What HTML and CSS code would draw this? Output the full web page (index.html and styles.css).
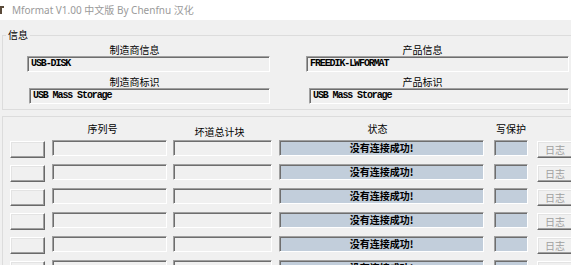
FILE: index.html
```html
<!DOCTYPE html>
<html lang="zh-CN">
<head>
  <meta charset="UTF-8">
  <title>Mformat V1.00 中文版 By Chenfnu 汉化</title>
  <link rel="stylesheet" href="styles.css">
</head>
<body>

<div class="titlebar">
  <svg class="app-icon" width="4" height="10" viewBox="0 0 4 10">
    <path d="M0 1h4v2H2v6H0z" fill="#5a4a3a"/>
  </svg>
  <span class="title-text">Mformat V1.00 中文版 By Chenfnu 汉化</span>
</div>

<div class="window">
  <!-- Grupo de información del dispositivo -->
  <fieldset class="group info">
    <legend>信息</legend>
    <div class="info-grid">
      <div class="info-col">
        <div class="cap">制造商信息</div>
        <div class="edit">USB-DISK</div>
        <div class="cap cap-2">制造商标识</div>
        <div class="edit edit-2">USB Mass Storage</div>
      </div>
      <div class="info-col right">
        <div class="cap">产品信息</div>
        <div class="edit">FREEDIK-LWFORMAT</div>
        <div class="cap cap-2">产品标识</div>
        <div class="edit edit-2">USB Mass Storage</div>
      </div>
    </div>
  </fieldset>

  <div class="group devices">
    <div class="dev-head">
      <div class="c-btn"></div>
      <div class="c-serial h-serial">序列号</div>
      <div class="c-bad h-bad">坏道总计块</div>
      <div class="c-status h-status">状态</div>
      <div class="c-wp">写保护</div>
    </div>

    <div class="dev-row">
      <div class="c-btn raised"></div>
      <div class="c-serial sunken"></div>
      <div class="c-bad sunken"></div>
      <div class="c-status sunken status">没有连接成功!</div>
      <div class="c-wp sunken status"></div>
      <div class="c-log raised">日志</div>
    </div>
    <div class="dev-row">
      <div class="c-btn raised"></div>
      <div class="c-serial sunken"></div>
      <div class="c-bad sunken"></div>
      <div class="c-status sunken status">没有连接成功!</div>
      <div class="c-wp sunken status"></div>
      <div class="c-log raised">日志</div>
    </div>
    <div class="dev-row">
      <div class="c-btn raised"></div>
      <div class="c-serial sunken"></div>
      <div class="c-bad sunken"></div>
      <div class="c-status sunken status">没有连接成功!</div>
      <div class="c-wp sunken status"></div>
      <div class="c-log raised">日志</div>
    </div>
    <div class="dev-row">
      <div class="c-btn raised"></div>
      <div class="c-serial sunken"></div>
      <div class="c-bad sunken"></div>
      <div class="c-status sunken status">没有连接成功!</div>
      <div class="c-wp sunken status"></div>
      <div class="c-log raised">日志</div>
    </div>
    <div class="dev-row">
      <div class="c-btn raised"></div>
      <div class="c-serial sunken"></div>
      <div class="c-bad sunken"></div>
      <div class="c-status sunken status">没有连接成功!</div>
      <div class="c-wp sunken status"></div>
      <div class="c-log raised">日志</div>
    </div>
    <div class="dev-row">
      <div class="c-btn raised"></div>
      <div class="c-serial sunken"></div>
      <div class="c-bad sunken"></div>
      <div class="c-status sunken status">没有连接成功!</div>
      <div class="c-wp sunken status"></div>
      <div class="c-log raised">日志</div>
    </div>
  </div>
</div>

</body>
</html>
```

FILE: styles.css
```css
body {
  margin: 0;
  width: 571px;
  height: 265px;
  overflow: hidden;
  background-color: #f0f0f0;
  font-family: "Noto Sans CJK SC", "Noto Sans", sans-serif;
  font-size: 10px;
  color: #000;
}
.titlebar {
  height: 20px;
  background: #fff;
  display: flex;
  align-items: center;
}
.app-icon {
  display: block;
  margin-right: 8px;
}
.title-text {
  font-family: "Noto Sans", "Noto Sans CJK SC", sans-serif;
  font-size: 10px;
  color: #9a9a9a;
  line-height: 20px;
}
.window {
  padding-left: 2px;
}
/* Marcos de grupo */
.group {
  width: 600px;
  box-sizing: border-box;
  border: 1px solid #dcdcdc;
}
fieldset.info {
  margin: 9px 0 0;
  padding: 3px 0 5px;
  min-width: 0;
}
fieldset.info legend {
  margin-left: 3px;
  padding: 0 2px;
  line-height: 12px;
  font-size: 10px;
}
.info-grid {
  display: flex;
}
.info-col {
  width: 267px;
  display: flex;
  flex-direction: column;
}
.info-col.right {
  width: 289px;
  margin-left: 10px;
}
.cap {
  line-height: 12px;
  text-align: center;
  padding-right: 4px;
}
.cap-2 {
  margin-top: 4px;
}
.edit {
  margin-left: 24px;
  height: 16px;
  box-sizing: border-box;
  border-top: 1px solid #a0a0a0;
  border-left: 1px solid #a0a0a0;
  border-right: 1px solid #fff;
  border-bottom: 1px solid #fff;
  box-shadow: inset 1px 1px 0 #6e6e6e;
  font-family: "Liberation Mono", monospace;
  font-size: 10px;
  font-weight: bold;
  letter-spacing: -1.1px;
  line-height: 14px;
  padding-left: 3px;
}
.right .edit {
  margin-left: 26px;
}
.edit-2 {
  margin-left: 26px;
}
.right .edit-2 {
  margin-left: 29px;
}
/* Lista de dispositivos */
.devices {
  margin-top: 6px;
  padding: 6px 0 0 7px;
  height: 160px;
}
.dev-head {
  display: flex;
  height: 12px;
  line-height: 12px;
  margin-bottom: 5px;
}
.dev-head > div {
  text-align: center;
}
.h-serial {
  padding-right: 14px;
  box-sizing: border-box;
}
.h-bad {
  padding-top: 3px;
  padding-right: 6px;
  box-sizing: border-box;
}
.h-status {
  padding-right: 8px;
  box-sizing: border-box;
}
.dev-row {
  display: flex;
  align-items: flex-start;
  height: 24px;
}
.c-btn {
  width: 35px;
  flex: none;
}
.c-serial {
  width: 115px;
  margin-left: 7px;
  flex: none;
}
.c-bad {
  width: 99px;
  margin-left: 6px;
  flex: none;
}
.c-status {
  width: 205px;
  margin-left: 7px;
  flex: none;
}
.c-wp {
  width: 34px;
  margin-left: 10px;
  flex: none;
}
.c-log {
  width: 36px;
  margin-left: 9px;
  flex: none;
}
.sunken {
  height: 16px;
  box-sizing: border-box;
  border-top: 1px solid #a0a0a0;
  border-left: 1px solid #a0a0a0;
  border-right: 1px solid #fff;
  border-bottom: 1px solid #fff;
  box-shadow: inset 1px 1px 0 #6e6e6e;
}
.status {
  background-color: #c2cedb;
  text-align: center;
  font-weight: bold;
  line-height: 14px;
}
.raised {
  height: 17px;
  margin-top: 1px;
  box-sizing: border-box;
  border-top: 1px solid #fff;
  border-left: 1px solid #fff;
  border-right: 1px solid #696969;
  border-bottom: 1px solid #696969;
  box-shadow: inset -1px -1px 0 #a0a0a0, inset 1px 1px 0 #e3e3e3;
}
.c-log {
  color: #a0a0a0;
  text-align: center;
  line-height: 15px;
}
```
